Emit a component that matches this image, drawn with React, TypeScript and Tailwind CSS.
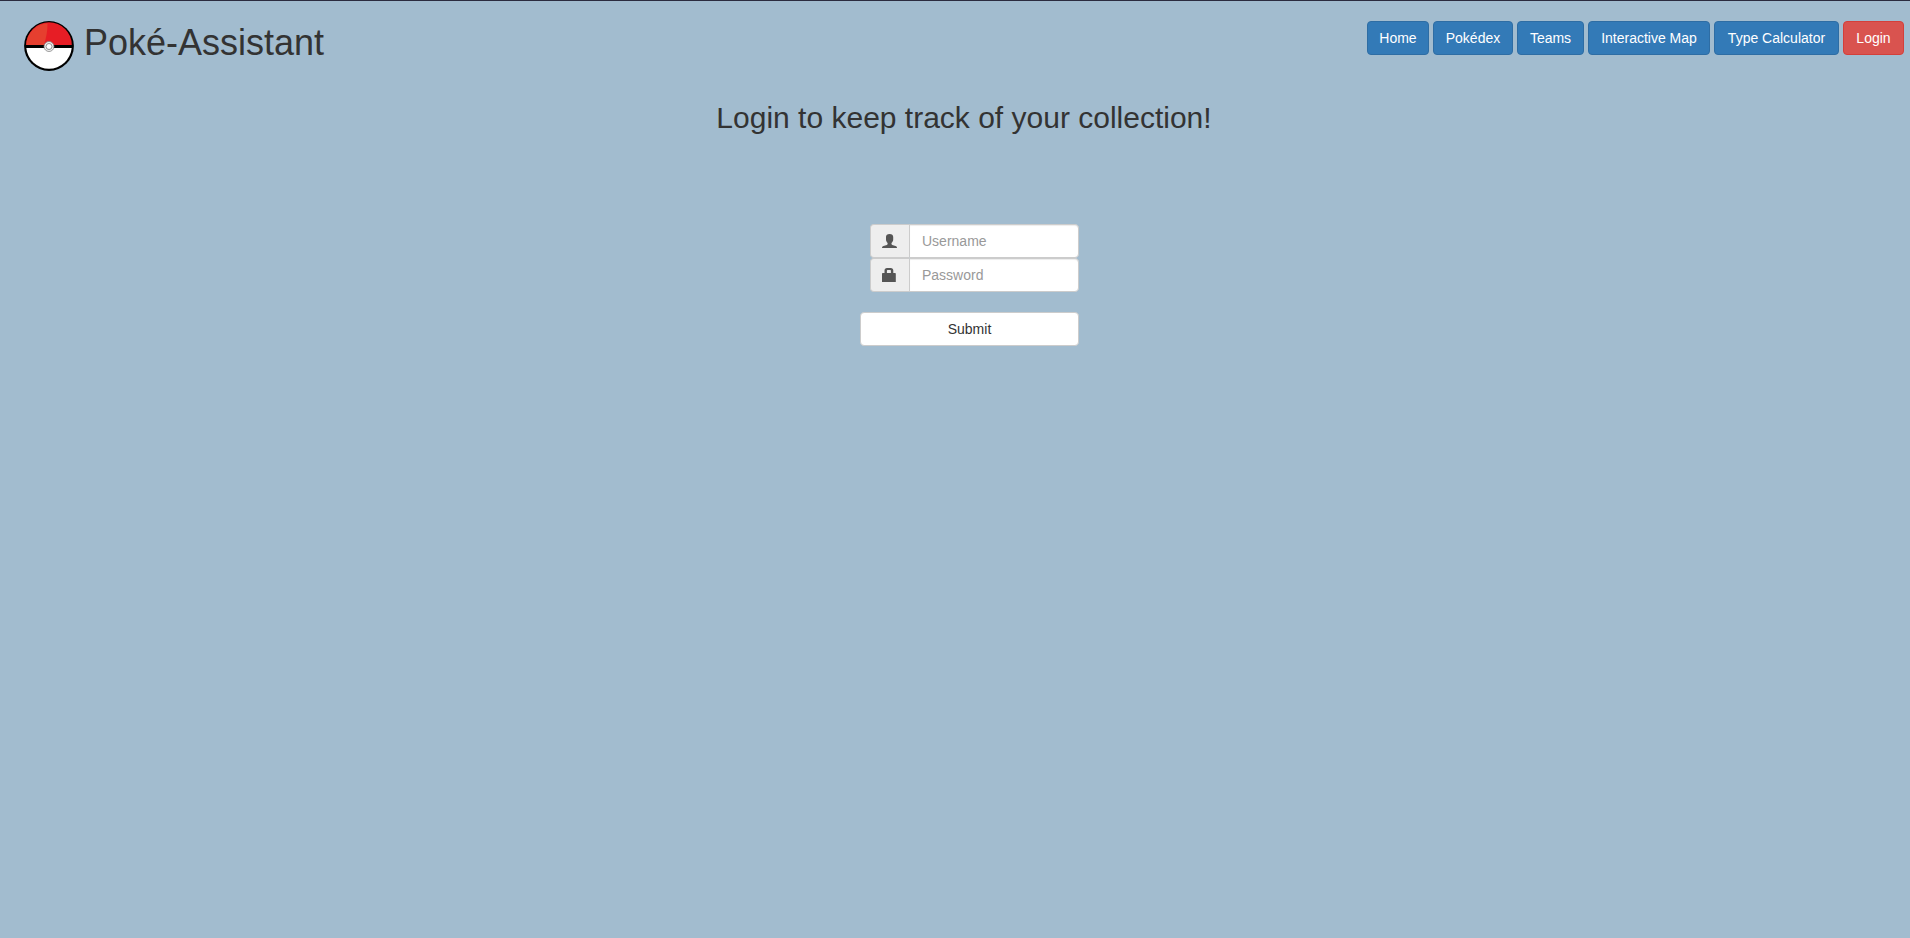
const links = [
  { label: 'Home', width: 'w-[62px]' },
  { label: 'Pokédex', width: 'w-[80px]' },
  { label: 'Teams', width: 'w-[67px]' },
  { label: 'Interactive Map', width: 'w-[122px]' },
  { label: 'Type Calculator', width: 'w-[125px]' },
];

function Pokeball() {
  return (
    <svg width="50" height="50" viewBox="0 0 50 50" className="shrink-0">
      <circle cx="25" cy="25" r="24.9" fill="#000" />
      <path d="M2.200 24a22.800 22.800 0 0 1 45.600 0z" fill="#e71d25" />
      <path d="M2.200 24a22.800 22.800 0 0 1 21.300-21.700c.2 8-1.500 15-3.500 21.700z" fill="#e63f2f" />
      <path d="M2.300 27a22.800 22.800 0 0 0 45.400 0z" fill="#fff" />
      <circle cx="25" cy="25.500" r="5" fill="#eee" stroke="#777" strokeWidth="0.700" />
      <circle cx="25" cy="25.500" r="3" fill="#fff" stroke="#777" strokeWidth="0.800" />
    </svg>
  );
}

function UserIcon() {
  return (
    <svg width="15" height="14" viewBox="0 0 15 14" fill="#555">
      <path d="M7.600 0C5.300 0 4 1.200 4 3v2.600c0 1.300.6 2.500 1.600 3.400v.9c0 .5-.3.800-.8 1L1.500 12C.5 12.400 0 13 0 14h15c0-1-.5-1.600-1.500-2l-3.200-1.100c-.5-.2-.8-.5-.8-1V9c1.100-.9 1.700-2.100 1.700-3.400V3C11.200 1.200 9.900 0 7.600 0z" />
    </svg>
  );
}

function LockIcon() {
  return (
    <svg width="15" height="14" viewBox="0 0 15 14" fill="#555">
      <path
        fillRule="evenodd"
        d="M2.500 5V2.500C2.500.9 3.500 0 5 0h3.800c1.500 0 2.500.9 2.500 2.500V5h1.800c.4 0 .7.300.7.700V14H0V5.700c0-.4.3-.7.700-.7zM4.900 5h4V2.800c0-.5-.2-.8-.7-.8H5.600c-.5 0-.7.300-.7.800z"
      />
    </svg>
  );
}

function Field({ type, label, icon }: { type: string; label: string; icon: React.ReactNode }) {
  return (
    <div className="flex h-[34px] w-[209px]">
      <span className="flex w-[39px] shrink-0 items-center rounded-l border border-r-0 border-[#ccc] bg-[#eee] pl-[11px]">
        {icon}
      </span>
      <input
        type={type}
        placeholder={label}
        className="h-[34px] w-[170px] rounded-r border border-[#ccc] bg-white px-3 py-1.5 text-[14px] leading-5 text-[#555] shadow-[inset_0_1px_1px_rgba(0,0,0,0.075)] outline-none placeholder:text-[#999]"
      />
    </div>
  );
}

export default function App() {
  return (
    <div className="min-h-screen border-t border-[#2b2b3f] bg-[#a2bccf] font-['Liberation_Sans',Arial,sans-serif] text-[14px] leading-5 text-[#333]">
      <header className="flex h-[70px] items-start justify-between pt-5 pr-[6px] pl-6">
        <div className="flex gap-[10px]">
          <Pokeball />
          <h1 className="pt-[2px] text-[36px] leading-[40px] font-normal">Poké-Assistant</h1>
        </div>
        <nav className="flex gap-1">
          {links.map((link) => (
            <button
              key={link.label}
              className={`h-[34px] rounded border border-[#2e6da4] bg-[#337ab7] whitespace-nowrap text-white ${link.width}`}
            >
              {link.label}
            </button>
          ))}
          <button className="h-[34px] w-[61px] rounded border border-[#d43f3a] bg-[#d9534f] text-white">Login</button>
        </nav>
      </header>
      <main>
        <h2 className="pt-[30px] pl-[18px] text-center text-[30px] leading-[33px] font-normal">
          Login to keep track of your collection!
        </h2>
        <form className="mt-[90px] ml-[860px] flex w-[219px] flex-col items-end">
          <Field type="text" label="Username" icon={<UserIcon />} />
          <Field type="password" label="Password" icon={<LockIcon />} />
          <button
            type="button"
            className="mt-5 h-[34px] w-full rounded border border-[#ccc] bg-white text-[#333]"
          >
            Submit
          </button>
        </form>
      </main>
    </div>
  );
}
